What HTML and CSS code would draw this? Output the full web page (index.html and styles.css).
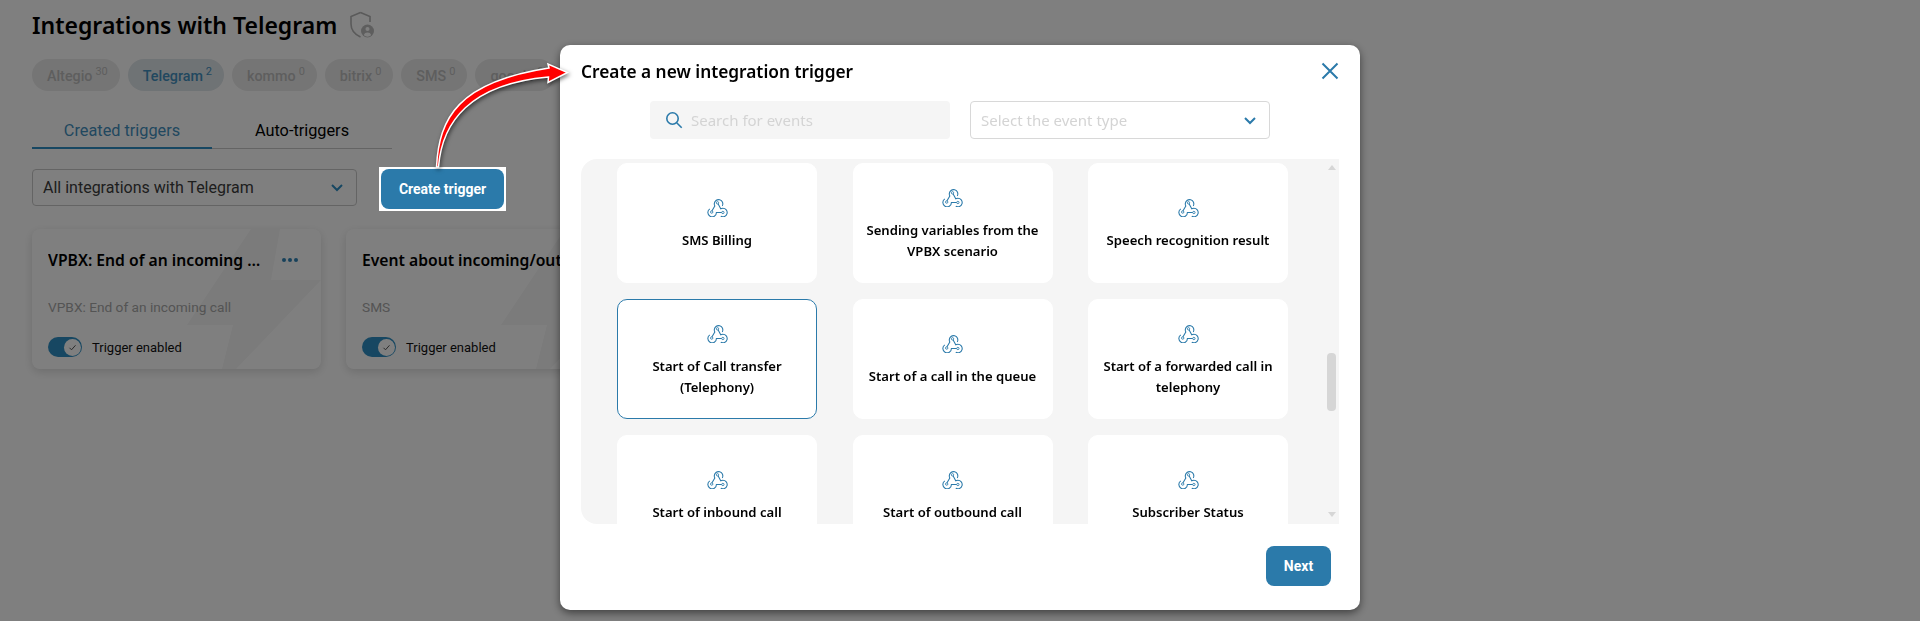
FILE: index.html
```html
<!DOCTYPE html>
<html lang="en">
<head>
<meta charset="utf-8">
<title>Integrations with Telegram</title>
<link rel="stylesheet" href="styles.css">
</head>
<body>
<svg class="defs" width="0" height="0" aria-hidden="true">
  <symbol id="webhook" viewBox="2.4 2.6 19.2 18.6">
    <g class="hook-line">
      <path d="M4.876 13.61a4 4 0 1 0 6.124 3.39h6"/>
      <path d="M15.066 20.502a4 4 0 1 0 1.934-7.502c-.706 0-1.424.179-2 .5l-3-5.5"/>
      <path d="M16.5 11a4 4 0 1 0-7.5-2c0 .712.19 1.418.5 2l-3 5"/>
    </g>
    <g class="hook-dots">
      <circle cx="12" cy="8" r="1.100"/>
      <circle cx="6.600" cy="16.600" r="1.100"/>
      <circle cx="17" cy="17" r="1.100"/>
    </g>
  </symbol>
  <symbol id="bolt" viewBox="0 0 289 140">
    <polygon points="219,0 248,0 239,51 289,51 204,140 190,140 201,96 155,96"/>
  </symbol>
  <symbol id="chev" viewBox="0 0 14 9">
    <path d="M2 2l5 5 5-5"/>
  </symbol>
</svg>

<main class="page">
  <header class="title-row">
    <h1 class="title">Integrations with Telegram</h1>
    <svg class="shield" viewBox="0 0 26 28" width="26" height="28">
      <path class="shield-line" d="M11.500 1.500 2 5.500v7.500c0 6.500 4 10.500 9.500 13M21 11V5.500L11.500 1.500"/>
      <circle class="shield-badge" cx="18.500" cy="20" r="6.500"/>
      <circle class="shield-person" cx="18.500" cy="18" r="2"/>
      <path class="shield-person" d="M14.800 24.200c.6-2 2-2.700 3.700-2.700s3.100.7 3.700 2.700a6 6 0 0 1-7.400 0z"/>
    </svg>
  </header>

  <nav class="chips">
    <a class="chip">Altegio<sup>30</sup></a>
    <a class="chip chip-active">Telegram<sup>2</sup></a>
    <a class="chip">kommo<sup>0</sup></a>
    <a class="chip">bitrix<sup>0</sup></a>
    <a class="chip">SMS<sup>0</sup></a>
    <a class="chip">google<sup>0</sup></a>
  </nav>

  <div class="tabs">
    <a class="tab tab-active">Created triggers</a>
    <a class="tab">Auto-triggers</a>
  </div>

  <div class="toolbar">
    <div class="page-select">
      <span>All integrations with Telegram</span>
      <svg class="chev chev-dim" width="14" height="9"><use href="#chev"/></svg>
    </div>
    <div class="highlight">
      <button class="btn btn-create">Create trigger</button>
    </div>
  </div>

  <section class="trigger-cards">
    <article class="trigger">
      <svg class="trigger-bolt" width="289" height="140"><use href="#bolt"/></svg>
      <div class="trigger-head">
        <h3 class="trigger-title">VPBX: End of an incoming call</h3>
        <span class="dots"><i></i><i></i><i></i></span>
      </div>
      <p class="trigger-sub">VPBX: End of an incoming call</p>
      <div class="trigger-toggle">
        <span class="toggle"><span class="knob"><svg width="9" height="9" viewBox="0 0 9 9"><path d="M1.500 4.800l2 2 4-4.500"/></svg></span></span>
        <span>Trigger enabled</span>
      </div>
    </article>
    <article class="trigger">
      <svg class="trigger-bolt" width="289" height="140"><use href="#bolt"/></svg>
      <div class="trigger-head">
        <h3 class="trigger-title">Event about incoming/outgoing SMS</h3>
        <span class="dots"><i></i><i></i><i></i></span>
      </div>
      <p class="trigger-sub">SMS</p>
      <div class="trigger-toggle">
        <span class="toggle"><span class="knob"><svg width="9" height="9" viewBox="0 0 9 9"><path d="M1.500 4.800l2 2 4-4.500"/></svg></span></span>
        <span>Trigger enabled</span>
      </div>
    </article>
  </section>
</main>

<div class="overlay">
  <div class="modal">
    <div class="modal-head">
      <h2 class="modal-title">Create a new integration trigger</h2>
      <svg class="close" width="18" height="18" viewBox="0 0 18 18"><path d="M1.500 1.500l15 15M16.500 1.500l-15 15"/></svg>
    </div>
    <div class="filters">
      <label class="search">
        <svg class="search-icon" width="18" height="18" viewBox="0 0 18 18"><circle cx="7.500" cy="7.500" r="5.700"/><path d="M11.700 11.700l5 5"/></svg>
        <span>Search for events</span>
      </label>
      <div class="type-select">
        <span>Select the event type</span>
        <svg class="chev" width="14" height="9"><use href="#chev"/></svg>
      </div>
    </div>
    <div class="list">
      <div class="grid">
        <div class="event"><svg class="hook"><use href="#webhook"/></svg><span>SMS Billing</span></div>
        <div class="event"><svg class="hook"><use href="#webhook"/></svg><span>Sending variables from the VPBX scenario</span></div>
        <div class="event"><svg class="hook"><use href="#webhook"/></svg><span>Speech recognition result</span></div>
        <div class="event event-selected"><svg class="hook"><use href="#webhook"/></svg><span>Start of Call transfer (Telephony)</span></div>
        <div class="event"><svg class="hook"><use href="#webhook"/></svg><span>Start of a call in the queue</span></div>
        <div class="event"><svg class="hook"><use href="#webhook"/></svg><span>Start of a forwarded call in telephony</span></div>
        <div class="event"><svg class="hook"><use href="#webhook"/></svg><span>Start of inbound call</span></div>
        <div class="event"><svg class="hook"><use href="#webhook"/></svg><span>Start of outbound call</span></div>
        <div class="event"><svg class="hook"><use href="#webhook"/></svg><span>Subscriber Status</span></div>
      </div>
      <span class="scroll-up"></span>
      <span class="scroll-thumb"></span>
      <span class="scroll-down"></span>
    </div>
    <div class="modal-foot">
      <button class="btn btn-next">Next</button>
    </div>
  </div>
</div>

<svg class="arrow" width="1920" height="621" viewBox="0 0 1920 621" aria-hidden="true">
  <path d="M436.500 167C439 118 458 82 549 68L548 64 567.500 72.500 548 82.500 548.500 77C470 84 442 122 438.500 167Z"/>
</svg>
</body>
</html>
```

FILE: styles.css
```css
* { box-sizing: border-box; }

html, body {
  margin: 0;
  height: 621px;
  overflow: hidden;
  background: #fff;
  font-family: Roboto, "Liberation Sans", sans-serif;
  color: #000;
}

.defs { position: absolute; }

/* ---------- page behind the modal ---------- */
.page { padding: 8px 0 0 32px; }

.title-row {
  display: flex;
  align-items: center;
  gap: 12px;
  height: 34px;
}

.title {
  margin: 0;
  font: 600 23px/34px "Noto Sans", sans-serif;
  white-space: nowrap;
}

.shield-line { fill: none; stroke: #b4b4b4; stroke-width: 1.600; }
.shield-badge { fill: #bdbdbd; }
.shield-person { fill: #fff; }

.chips {
  display: flex;
  gap: 8px;
  margin-top: 17px;
  width: 560px;
  overflow: hidden;
}

.chip {
  display: flex;
  flex: none;
  align-items: center;
  height: 32px;
  padding: 1px 12px 0 15px;
  border-radius: 16px;
  background: #ebebeb;
  color: #bdbdbd;
  font: 500 14.300px Roboto, sans-serif;
}

.chip sup {
  margin: -9px 0 0 3px;
  font-size: 11px;
  font-weight: 400;
  line-height: 1;
}

.chip-active { background: #dfe6ea; color: #4390bf; }

.tabs {
  display: flex;
  width: 360px;
  margin-top: 26px;
  border-bottom: 1px solid #c9c9c9;
}

.tab {
  flex: 0 0 50%;
  height: 32px;
  margin-bottom: -1px;
  padding-top: 3px;
  text-align: center;
  font-size: 16.300px;
  line-height: 22px;
  color: #000;
}

.tab-active {
  color: #4390bf;
  border-bottom: 2px solid #2f8fc4;
}

.toolbar {
  display: flex;
  align-items: flex-start;
  gap: 22px;
  margin-top: 18px;
}

.page-select {
  display: flex;
  align-items: center;
  justify-content: space-between;
  width: 325px;
  height: 37px;
  margin-top: 2px;
  padding: 0 12px 0 10px;
  border: 1px solid #c9c9c9;
  border-radius: 4px;
  font-size: 16px;
  color: #3c3c3c;
}

.highlight {
  position: relative;
  z-index: 20;
  padding: 2px;
  background: #fff;
}

.btn {
  display: block;
  border: 0;
  border-radius: 8px;
  background: #2b7aaa;
  color: #fff;
  font: 700 14px Roboto, sans-serif;
}

.btn-create { width: 123px; height: 40px; }
.btn-next { width: 65px; height: 40px; }

.trigger-cards {
  display: flex;
  gap: 25px;
  margin-top: 18px;
}

.trigger {
  position: relative;
  flex: none;
  width: 289px;
  height: 140px;
  padding: 20px 16px 0;
  overflow: hidden;
  border-radius: 8px;
  background: #fff;
  box-shadow: 0 3px 10px rgba(0, 0, 0, .14);
}

.trigger-bolt { position: absolute; top: 0; left: 0; fill: #f6f6f6; }

.trigger-head {
  position: relative;
  display: flex;
  align-items: center;
  gap: 20px;
  height: 22px;
}

.trigger-title {
  flex: 0 0 214px;
  margin: 0;
  overflow: hidden;
  white-space: nowrap;
  text-overflow: ellipsis;
  font: 600 15.700px/22px "Noto Sans", sans-serif;
}

.trigger:last-child .trigger-title { flex-basis: 400px; }

.dots { display: flex; gap: 2px; }
.dots i { width: 4px; height: 4px; border-radius: 50%; background: #2f83b6; }

.trigger-sub {
  position: relative;
  margin: 26px 0 0;
  font-size: 13.700px;
  line-height: 20px;
  color: #a8a8a8;
}

.trigger-toggle {
  position: relative;
  display: flex;
  align-items: center;
  gap: 10px;
  margin-top: 20px;
  font-size: 13px;
  color: #111;
}

.toggle {
  display: flex;
  align-items: center;
  justify-content: flex-end;
  width: 34px;
  height: 20px;
  padding-right: 1px;
  border-radius: 10px;
  background: #2f8fc4;
}

.knob {
  display: flex;
  align-items: center;
  justify-content: center;
  width: 17px;
  height: 17px;
  border-radius: 50%;
  background: #fff;
}

.knob path { fill: none; stroke: #555; stroke-width: 1; }

/* ---------- overlay and modal ---------- */
.overlay {
  position: fixed;
  inset: 0;
  z-index: 10;
  display: flex;
  justify-content: center;
  padding-top: 45px;
  background: rgba(0, 0, 0, .5);
}

.modal {
  display: flex;
  flex-direction: column;
  width: 800px;
  height: 565px;
  padding: 0 21px;
  border-radius: 10px;
  background: #fff;
  box-shadow: 0 3px 8px rgba(0, 0, 0, .5);
}

.modal-head {
  display: flex;
  align-items: center;
  justify-content: space-between;
  height: 54px;
  margin-bottom: 2px;
}

.modal-title {
  margin: 0;
  font: 600 17.300px/24px "Noto Sans", sans-serif;
}

.close { fill: none; stroke: #2b7aaa; stroke-width: 2; margin-top: -2px; }

.filters {
  display: flex;
  justify-content: center;
  gap: 20px;
}

.search, .type-select {
  display: flex;
  align-items: center;
  width: 300px;
  height: 38px;
  border-radius: 4px;
  font: 400 15px "Noto Sans", sans-serif;
  color: #d4d4d4;
}

.search { gap: 8px; padding-left: 15px; background: #f5f5f5; }
.search-icon { fill: none; stroke: #2b7aaa; stroke-width: 1.600; }

.type-select {
  justify-content: space-between;
  padding: 0 12px 0 10px;
  border: 1px solid #d8d8d8;
}

.chev { fill: none; stroke: #2b7aaa; stroke-width: 2; }
.chev-dim { stroke: #2f8fc4; }

.list {
  position: relative;
  height: 365px;
  margin-top: 20px;
  padding: 4px 0 0 36px;
  overflow: hidden;
  border-radius: 16px 0 0 16px;
  background: #f5f5f5;
}

.grid {
  display: grid;
  grid-template-columns: repeat(3, 200px);
  grid-auto-rows: 120px;
  gap: 16px 35.500px;
}

.event {
  display: flex;
  flex-direction: column;
  align-items: center;
  justify-content: center;
  gap: 13px;
  padding: 2px 8px 0;
  border: 1px solid #fff;
  border-radius: 10px;
  background: #fff;
  text-align: center;
  font: 600 13.100px/21px "Noto Sans", sans-serif;
  color: #000;
}

.event-selected { border-color: #2b7aaa; }

.hook { width: 21px; height: 20px; flex: none; }
.hook-line { fill: none; stroke: #2b7aaa; stroke-width: 1; }
.hook-dots { fill: #fff; stroke: #2b7aaa; stroke-width: .8; }

.scroll-up, .scroll-down, .scroll-thumb { position: absolute; right: 3px; }

.scroll-up, .scroll-down {
  width: 0;
  height: 0;
  border-left: 4.500px solid transparent;
  border-right: 4.500px solid transparent;
}

.scroll-up { top: 6px; border-bottom: 5px solid #d6d6d6; }
.scroll-down { bottom: 7px; border-top: 5px solid #d6d6d6; }

.scroll-thumb {
  top: 194px;
  width: 9px;
  height: 58px;
  border-radius: 4px;
  background: #d6d6d6;
}

.modal-foot {
  display: flex;
  justify-content: flex-end;
  padding: 22px 8px 0 0;
}

/* ---------- annotation arrow ---------- */
.arrow {
  position: fixed;
  inset: 0;
  z-index: 30;
  pointer-events: none;
  filter: drop-shadow(1px 2px 2px rgba(0, 0, 0, .55));
}

.arrow path { fill: #f00; stroke: #fff; stroke-width: 1.500; stroke-linejoin: miter; }
```
